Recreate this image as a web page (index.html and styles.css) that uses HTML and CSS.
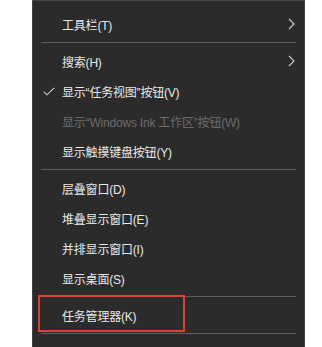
FILE: index.html
```html
<!DOCTYPE html>
<html lang="zh-CN">
<head>
<meta charset="utf-8">
<link rel="stylesheet" href="styles.css">
</head>
<body>
<div class="menu">
  <div class="item"><span class="label">工具栏(T)</span><svg class="chev" width="7" height="12" viewBox="0 0 7 12"><polyline points="1,1 6,6 1,11" fill="none" stroke="#cfcfcf" stroke-width="1.1"/></svg></div>
  <div class="sep"></div>
  <div class="item"><span class="label">搜索(H)</span><svg class="chev" width="7" height="12" viewBox="0 0 7 12"><polyline points="1,1 6,6 1,11" fill="none" stroke="#cfcfcf" stroke-width="1.1"/></svg></div>
  <div class="item"><svg class="check" width="12" height="9" viewBox="0 0 12 9"><polyline points="0.8,4.6 4,7.8 11.2,0.8" fill="none" stroke="#d0d0d0" stroke-width="1.1"/></svg><span class="label">显示“任务视图”按钮(V)</span></div>
  <div class="item disabled"><span class="label">显示“Windows Ink 工作区”按钮(W)</span></div>
  <div class="item"><span class="label">显示触摸键盘按钮(Y)</span></div>
  <div class="sep"></div>
  <div class="item"><span class="label">层叠窗口(D)</span></div>
  <div class="item"><span class="label">堆叠显示窗口(E)</span></div>
  <div class="item"><span class="label">并排显示窗口(I)</span></div>
  <div class="item"><span class="label">显示桌面(S)</span></div>
  <div class="sep"></div>
  <div class="item marked"><span class="label">任务管理器(K)</span><span class="redbox"></span></div>
  <div class="sep"></div>
</div>
</body>
</html>
```
FILE: styles.css
```css
html, body {
  margin: 0;
  padding: 0;
  background: #ffffff;
}
body {
  width: 322px;
  height: 347px;
  overflow: hidden;
}
.menu {
  margin-left: 32px;
  width: 271px;
  height: 346px;
  background: #2b2b2b;
  border: 1px solid #454545;
  border-bottom: none;
  padding-top: 8px;
  box-sizing: content-box;
  font-family: "Liberation Sans", "Noto Sans CJK SC", sans-serif;
  font-size: 12px;
  color: #e8e8e8;
}
.item {
  position: relative;
  height: 30px;
  display: flex;
  align-items: center;
  padding-left: 29px;
  padding-right: 9px;
}
.label {
  flex: 1;
  white-space: nowrap;
  letter-spacing: -0.2px;
}
.disabled .label {
  color: #6c6c6c;
}
.chev {
  flex: none;
}
.check {
  position: absolute;
  left: 10px;
  top: 11px;
}
.sep {
  height: 1px;
  margin: 3px 8px 3px 8px;
  background: #5e5e5e;
}
.redbox {
  position: absolute;
  left: 5px;
  top: -5px;
  width: 143px;
  height: 33px;
  border: 2px solid #d8423b;
}
```
